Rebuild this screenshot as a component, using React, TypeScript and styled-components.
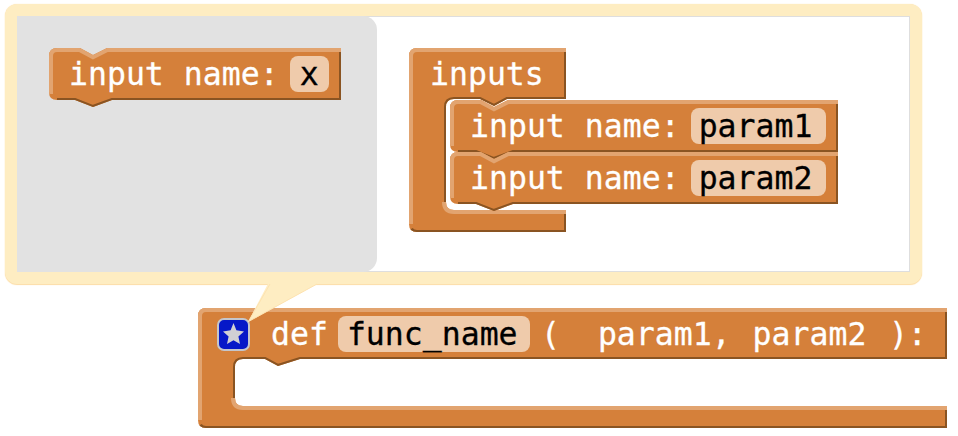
import React from "react";
import styled, { createGlobalStyle } from "styled-components";

const FILL = "#d5803a";
const LIGHT = "#e2a470";
const DARK = "#8a5422";

const GlobalStyle = createGlobalStyle`
	html, body {
		margin: 0;
		background: #ffffff;
		overflow: hidden;
	}
`;

const Page = styled.div`
	width: 958px;
	height: 436px;
	box-sizing: border-box;
	padding: 4px 0 0 5px;
	font-family: "DejaVu Sans Mono", monospace;
	font-size: 31.5px;
	-webkit-text-stroke: 0.3px currentColor;
`;

const Bubble = styled.div`
	position: relative;
	display: flex;
	box-sizing: border-box;
	width: 917px;
	height: 280px;
	border: 12px solid #feedc2;
	border-radius: 12px;
	background: #ffffff;
	box-shadow: inset 0 0 0 1px #dedede, 0 1px 1px 0 #fcdca6, 0 0 1px 0 #fcdca6;
`;

const Flyout = styled.div`
	width: 360px;
	height: 100%;
	box-sizing: border-box;
	padding: 32px 0 0 32px;
	background: #e2e2e2;
	border-radius: 0 14px 14px 0;
`;

const Workspace = styled.div`
	flex: 1;
	padding: 32px 0 0 32px;
`;

const Tail = styled.svg`
	position: absolute;
	left: 231px;
	top: 258px;
	z-index: 2;
	width: 90px;
	height: 50px;
`;

const DefArea = styled.div`
	margin: 24px 0 0 193px;
`;

const Block = styled.div<{ $w: number; $h: number }>`
	position: relative;
	width: ${(p) => p.$w}px;
	height: ${(p) => p.$h}px;
`;

const Shape = styled.svg`
	position: absolute;
	left: 0;
	top: 0;
	overflow: visible;
`;

const Row = styled.div<{ $pad?: number }>`
	position: relative;
	display: flex;
	align-items: center;
	height: 52px;
	padding-left: ${(p) => p.$pad ?? 20}px;
	color: #ffffff;
	white-space: pre;
`;

const Field = styled.span<{ $w: number; $ml?: number; $pad?: number }>`
	display: flex;
	align-items: center;
	box-sizing: border-box;
	width: ${(p) => p.$w}px;
	height: 36px;
	margin-left: ${(p) => p.$ml ?? 11}px;
	padding-left: ${(p) => p.$pad ?? 8}px;
	border-radius: 8px;
	background: #efcbab;
	color: #000000;
`;

const Label = styled.span<{ $ml?: number; $gap?: number }>`
	margin-left: ${(p) => p.$ml ?? 0}px;
	word-spacing: ${(p) => p.$gap ?? 0}px;
`;

const Stack = styled.div`
	position: relative;
	margin-left: 41px;
`;

const StarBadge = styled.svg`
	width: 33px;
	height: 33px;
	margin-right: 21px;
	flex-shrink: 0;
`;

type ShapeProps = { id: string; fill: string; light: string; dark: string };

const BlockShape = ({ id, fill, light, dark }: ShapeProps) => (
	<Shape width="1" height="1">
		<defs>
			<clipPath id={id}>
				<path d={fill} />
			</clipPath>
		</defs>
		<path d={fill} fill={FILL} />
		<g clipPath={`url(#${id})`} fill="none">
			<path d={dark} stroke={DARK} strokeWidth="4" />
			<path d={light} stroke={LIGHT} strokeWidth="8" />
		</g>
	</Shape>
);

type InputBlockProps = { id: string; w: number; value: string; fieldW: number; fieldPad?: number };

const InputBlock = ({ id, w, value, fieldW, fieldPad }: InputBlockProps) => (
	<Block $w={w} $h={52}>
		<BlockShape
			id={id}
			fill={`M8,0 H31 L44,7 L58,0 H${w} V52 H63 L44,59 L26,52 H8 Q0,52 0,44 V8 Q0,0 8,0 Z`}
			light={`M0,46 V8 Q0,0 8,0 H31 L44,7 L58,0 H${w}`}
			dark={`M${w},0 V52 H63 L44,59 L26,52 H8`}
		/>
		<Row>
			<Label $gap={1}>input name:</Label>
			<Field $w={fieldW} $pad={fieldPad}>{value}</Field>
		</Row>
	</Block>
);

const App = () => {
	const inputsFill =
		"M8,0 H157 V51 H98 L85,58 L71,51 H45 Q37,51 37,59 V154 Q37,162 45,162 H157 V184 H8 Q0,184 0,176 V8 Q0,0 8,0 Z";
	const defFill =
		"M8,0 H749 V51 H102 L80,58 L67,51 H45 Q37,51 37,59 V90 Q37,98 45,98 H749 V120 H8 Q0,120 0,112 V8 Q0,0 8,0 Z";

	return (
		<Page>
			<GlobalStyle />
			<Bubble>
				<Flyout>
					<InputBlock id="flyoutInput" w={292} value="x" fieldW={39} fieldPad={10} />
				</Flyout>
				<Workspace>
					<Block $w={157} $h={184}>
						<BlockShape
							id="inputsBlock"
							fill={inputsFill}
							light="M0,176 V8 Q0,0 8,0 H157 M37,154 Q37,162 45,162 H157"
							dark="M157,0 V51 H98 L85,58 L71,51 H45 Q37,51 37,59 V154 M157,162 V184 H8 Q4,184 2,181"
						/>
						<Row $pad={21}>
							<Label>inputs</Label>
						</Row>
						<Stack>
							<InputBlock id="param1Input" w={388} value="param1" fieldW={135} />
							<InputBlock id="param2Input" w={388} value="param2" fieldW={135} />
						</Stack>
					</Block>
				</Workspace>
				<Tail viewBox="0 0 90 50">
					<polygon points="23,4 80,4 0,48" fill="#feedc2" />
					<path d="M22,10 L0.5,47.5 L69,10" fill="none" stroke="#fde2b0" strokeWidth="1" />
				</Tail>
			</Bubble>
			<DefArea>
				<Block $w={749} $h={120}>
					<BlockShape
						id="defBlock"
						fill={defFill}
						light="M0,112 V8 Q0,0 8,0 H749 M37,90 Q37,98 45,98 H749"
						dark="M749,0 V51 H102 L80,58 L67,51 H45 Q37,51 37,59 V90 M749,98 V120 H8 Q4,120 2,117"
					/>
					<Row $pad={19}>
						<StarBadge viewBox="0 0 33 33">
							<rect x="1" y="1" width="31" height="31" rx="6" fill="#0618c8" stroke="#c4c6cc" strokeWidth="2" />
							<polygon
								points="16.5,5 19.4,12.3 27,13.4 21.4,18.6 23,26 16.5,22.2 10,26 11.6,18.6 6,13.4 13.6,12.3"
								fill="#d0d0d4"
							/>
						</StarBadge>
						<Label>def</Label>
						<Field $w={192} $ml={10} $pad={9}>func_name</Field>
						<Label $ml={11}>(</Label>
						<Label $ml={38} $gap={3}>param1, param2</Label>
						<Label $ml={22.5}>):</Label>
					</Row>
				</Block>
			</DefArea>
		</Page>
	);
};

export default App;
